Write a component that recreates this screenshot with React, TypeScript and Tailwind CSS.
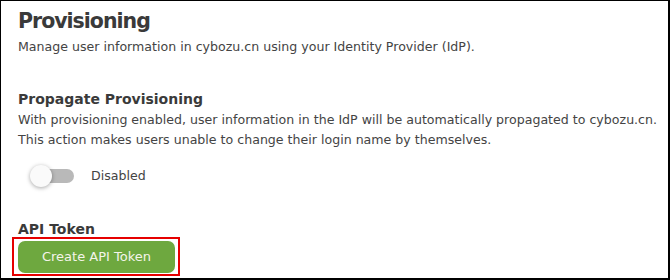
import React from "react";

const font = { fontFamily: '"DejaVu Sans", Verdana, sans-serif' };

export default function App() {
  return (
    <div
      className="w-[670px] h-[280px] bg-white border-t border-l border-r-2 border-b-2 border-black text-[#333333] overflow-hidden"
      style={font}
    >
      <div className="pl-[17px] pt-[8px] flex flex-col">
        <h1 className="text-[20.5px] leading-[24px] font-bold tracking-[-1px] text-[#3a3a3a]">Provisioning</h1>
        <p className="mt-[4px] text-[12.6px] leading-[20px] text-[#444]">
          Manage user information in cybozu.cn using your Identity Provider (IdP).
        </p>

        <h2 className="mt-[32px] text-[14px] leading-[20px] font-bold text-[#3a3a3a]">
          Propagate Provisioning
        </h2>
        <p className="mt-[1px] text-[12.6px] leading-[20px] text-[#444] whitespace-nowrap">
          With provisioning enabled, user information in the IdP will be automatically propagated to cybozu.cn.
          <br />
          This action makes users unable to change their login name by themselves.
        </p>

        <div className="mt-[14px] flex items-center h-[24px]">
          <div className="relative ml-[12px] w-[44px] h-[24px]">
            <div className="absolute left-[4px] right-0 top-[5px] h-[14px] rounded-full bg-[#b9b9b9]" />
            <div className="absolute left-0 top-[1px] w-[22px] h-[22px] rounded-full bg-[#fafafa] shadow-[0_1px_4px_rgba(0,0,0,0.35)]" />
          </div>
          <span className="ml-[17px] text-[12.6px] leading-[20px] text-[#444]">Disabled</span>
        </div>

        <h2 className="mt-[31px] text-[14px] leading-[20px] font-bold text-[#3a3a3a]">API Token</h2>
        <div className="relative mt-[2px] w-[157px]">
          <button className="w-[157px] h-[32px] rounded-[7px] bg-[#6ea83f] text-[#f4f4ea] text-[13px] flex items-center justify-center">
            Create API Token
          </button>
          <div className="absolute left-[-6px] top-[-4px] w-[168px] h-[39px] border-2 border-[#e60000] pointer-events-none" />
        </div>
      </div>
    </div>
  );
}
